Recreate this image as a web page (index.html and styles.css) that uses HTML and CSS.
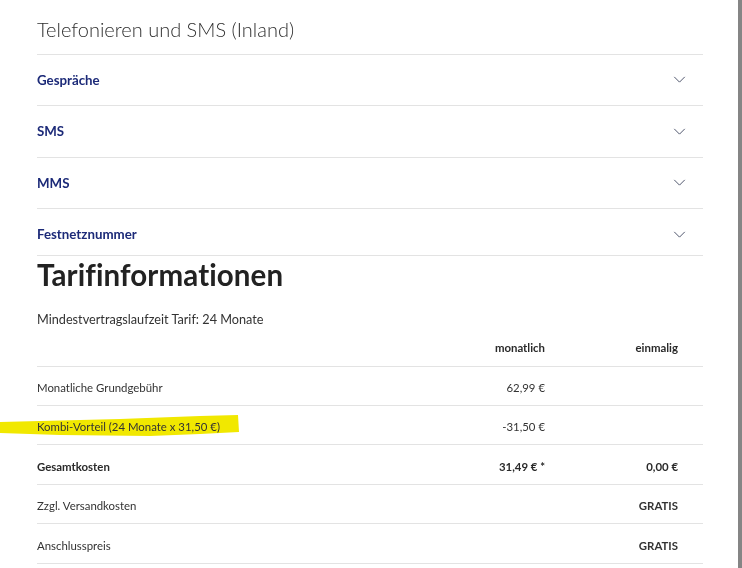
FILE: index.html
```html
<!DOCTYPE html>
<html lang="de">
<head>
<meta charset="utf-8">
<title>Tarifinformationen</title>
<link rel="stylesheet" href="styles.css">
</head>
<body>
<div class="page">
  <main class="content">
    <h2 class="section-title">Telefonieren und SMS (Inland)</h2>
    <div class="accordion">
      <div class="acc-row"><span class="acc-label">Gespräche</span><svg class="chev" viewBox="0 0 14 8"><path d="M1 1 L7 7 L13 1"/></svg></div>
      <div class="acc-row acc-tall"><span class="acc-label">SMS</span><svg class="chev" viewBox="0 0 14 8"><path d="M1 1 L7 7 L13 1"/></svg></div>
      <div class="acc-row"><span class="acc-label">MMS</span><svg class="chev" viewBox="0 0 14 8"><path d="M1 1 L7 7 L13 1"/></svg></div>
      <div class="acc-row acc-last"><span class="acc-label">Festnetznummer</span><svg class="chev" viewBox="0 0 14 8"><path d="M1 1 L7 7 L13 1"/></svg></div>
    </div>
    <h1 class="tarif-title">Tarifinformationen</h1>
    <p class="min-term">Mindestvertragslaufzeit Tarif: 24 Monate</p>
    <div class="price-table">
      <div class="pt-row pt-head">
        <div class="c-label"></div>
        <div class="c-num">monatlich</div>
        <div class="c-num">einmalig</div>
      </div>
      <div class="pt-row">
        <div class="c-label">Monatliche Grundgebühr</div>
        <div class="c-num">62,99 €</div>
        <div class="c-num"></div>
      </div>
      <div class="pt-row">
        <div class="c-label marked"><svg class="marker" viewBox="0 0 240 24" preserveAspectRatio="none"><path d="M0 8 L40 7 L120 5 L200 2 L238 1 L239 18 L200 20 L150 22 L60 21 L0 19 Z"/></svg><span class="mark-text">Kombi-Vorteil (24 Monate x 31,50 €)</span></div>
        <div class="c-num">-31,50 €</div>
        <div class="c-num"></div>
      </div>
      <div class="pt-row pt-strong pt-tall">
        <div class="c-label">Gesamtkosten</div>
        <div class="c-num">31,49 € *</div>
        <div class="c-num">0,00 €</div>
      </div>
      <div class="pt-row">
        <div class="c-label">Zzgl. Versandkosten</div>
        <div class="c-num"></div>
        <div class="c-num bold">GRATIS</div>
      </div>
      <div class="pt-row pt-tall">
        <div class="c-label">Anschlusspreis</div>
        <div class="c-num"></div>
        <div class="c-num bold">GRATIS</div>
      </div>
    </div>
  </main>
  <div class="scroll-edge"></div>
</div>
</body>
</html>
```
FILE: styles.css
```css
* { box-sizing: border-box; }
html, body { margin: 0; padding: 0; background: #fff; }
body {
  font-family: Lato, "Open Sans", "Liberation Sans", sans-serif;
  color: #333;
  height: 568px;
  overflow: hidden;
}
.page {
  display: flex;
  height: 568px;
}
.content {
  flex: 1;
  padding: 0 35px 0 37px;
}
.scroll-edge {
  width: 4px;
  background: #858585;
}
.section-title {
  margin: 0;
  padding: 16px 0 12px;
  font-size: 20px;
  line-height: 26px;
  font-weight: 300;
  color: #2e2e2e;
  border-bottom: 1px solid #e3e3e3;
}
.accordion { display: flex; flex-direction: column; }
.acc-row {
  display: flex;
  align-items: center;
  justify-content: space-between;
  height: 51px;
  border-bottom: 1px solid #e3e3e3;
  padding: 0 17px 1px 0;
}
.acc-row.acc-tall { height: 52px; }
.acc-row.acc-last { height: 47px; padding-top: 5px; }
.acc-label {
  font-size: 13.3px;
  font-weight: 700;
  color: #1c2a78;
}
.chev {
  width: 13px;
  height: 7px;
  fill: none;
  stroke: #4a5068;
  stroke-width: 1.1;
}
.tarif-title {
  margin: 1px 0 0;
  font-size: 29.5px;
  line-height: 36px;
  font-weight: 700;
  color: #222;
  letter-spacing: 0.1px;
}
.min-term {
  margin: 17px 0 0;
  font-size: 12.7px;
  line-height: 18px;
  color: #333;
}
.price-table { margin-top: 0; }
.pt-row {
  display: grid;
  grid-template-columns: 1fr 120px 133px;
  align-items: center;
  height: 39px;
  padding-top: 3px;
  border-bottom: 1px solid #e3e3e3;
  font-size: 11.4px;
  color: #333;
}
.pt-row.pt-tall { height: 40px; }
.pt-head { padding-top: 0; font-weight: 700; color: #2a2a2a; }
.pt-strong { font-weight: 700; color: #2a2a2a; }
.c-num { text-align: right; padding-right: 25px; }
.bold { font-weight: 700; }
.marked { position: relative; }
.marker {
  position: absolute;
  left: -37px;
  top: -6px;
  width: 240px;
  height: 24px;
  fill: #f1e800;
  mix-blend-mode: multiply;
}
.mark-text { position: relative; }
```
